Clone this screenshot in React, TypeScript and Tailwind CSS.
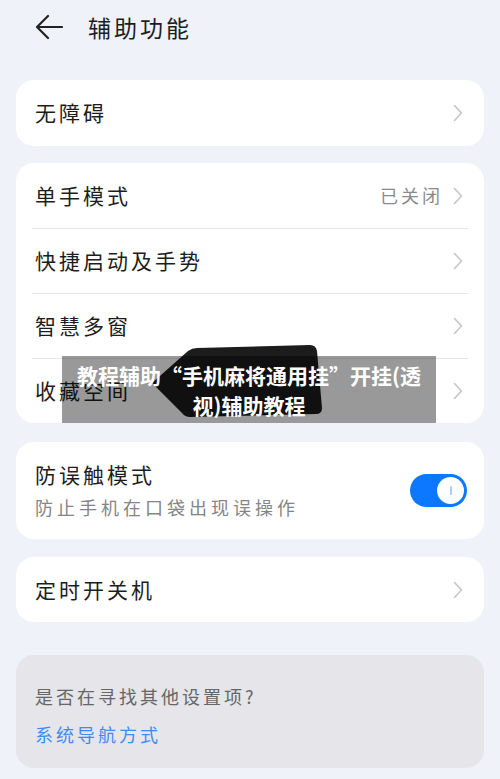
import * as React from "react";

const cjk = { fontFamily: "'Noto Sans CJK SC', 'Noto Sans', sans-serif" };

function Chevron() {
  return (
    <svg width="10" height="18" viewBox="0 0 10 18" fill="none">
      <path d="M1.5 1.5L8.5 9L1.5 16.5" stroke="#c6c6c6" strokeWidth="1.6" strokeLinecap="round" strokeLinejoin="round" />
    </svg>
  );
}

function Row({ label, value, first }: { label: string; value?: string; first?: boolean }) {
  return (
    <div className="px-[16px]">
      <div className={`flex h-[65px] items-center justify-between pl-[3px] pr-[5px] ${first ? "" : "border-t border-[#e6e6e6]"}`}>
        <span className="text-[21px] tracking-[3px] text-[#1d1d1d]">{label}</span>
        <div className="flex items-center gap-[10px]">
          {value && <span className="text-[18px] tracking-[3px] text-[#8a8a8a]">{value}</span>}
          <Chevron />
        </div>
      </div>
    </div>
  );
}

export default function App() {
  return (
    <div className="relative min-h-screen w-full overflow-hidden bg-[#eff2f8]" style={cjk}>
      <div className="flex h-[52px] items-center pl-[35px] pt-[2px]">
        <svg width="28" height="26" viewBox="0 0 28 26" fill="none">
          <path d="M27 13H2M13 2L2 13L13 24" stroke="#222" strokeWidth="2.2" strokeLinecap="round" strokeLinejoin="round" />
        </svg>
        <span className="ml-[25px] text-[23px] tracking-[3px] text-[#1d1d1d]">辅助功能</span>
      </div>

      <div className="flex flex-col px-[16px] pt-[28px]">
        <div className="flex h-[66px] items-center justify-between rounded-[18px] bg-white pl-[19px] pr-[21px]">
          <span className="text-[21px] tracking-[3px] text-[#1d1d1d]">无障碍</span>
          <Chevron />
        </div>

        <div className="mt-[17px] rounded-[18px] bg-white">
          <Row label="单手模式" value="已关闭" first />
          <Row label="快捷启动及手势" />
          <Row label="智慧多窗" />
          <Row label="收藏空间" />
        </div>

        <div className="mt-[19px] flex h-[97px] items-center justify-between rounded-[18px] bg-white pl-[19px] pr-[17px]">
          <div className="flex flex-col">
            <span className="text-[21px] leading-[30px] tracking-[3px] text-[#1d1d1d]">防误触模式</span>
            <span className="mt-[3px] text-[18px] leading-[30px] tracking-[4px] text-[#858585]">防止手机在口袋出现误操作</span>
          </div>
          <div className="flex h-[33px] w-[57px] items-center justify-end rounded-full bg-[#0b78ff] pr-[3px]">
            <div className="flex h-[27px] w-[27px] items-center justify-center rounded-full bg-white">
              <div className="h-[9px] w-[2px] rounded-full bg-[#a9cdfb]" />
            </div>
          </div>
        </div>

        <div className="mt-[18px] flex h-[65px] items-center justify-between rounded-[18px] bg-white pl-[19px] pr-[21px]">
          <span className="text-[21px] tracking-[3px] text-[#1d1d1d]">定时开关机</span>
          <Chevron />
        </div>

        <div className="mt-[33px] flex h-[113px] flex-col rounded-[18px] bg-[#e5e5ea] pl-[19px] pt-[26px]">
          <span className="text-[18px] leading-[30px] tracking-[3px] text-[#666666]">是否在寻找其他设置项?</span>
          <span className="mt-[8px] text-[18px] leading-[30px] tracking-[3px] text-[#3d8cf6]">系统导航方式</span>
        </div>
      </div>

      <svg className="absolute left-[148px] top-[342px]" width="180" height="80" viewBox="148 342 180 80">
        <path
          d="M152 383L188 351Q192 348 197 348L310 345Q316 345 317 351L322 408Q322 414 316 414L190 417Q185 417 182 413Z"
          fill="#1c1c1c"
        />
      </svg>

      <div className="absolute left-[62px] top-[356px] flex h-[67px] w-[374px] flex-col items-center justify-center bg-black/40 px-[10px]">
        <span className="text-center text-[21px] font-bold leading-[30px] text-white">
          教程辅助“手机麻将通用挂”开挂(透
          <br />
          视)辅助教程
        </span>
      </div>
    </div>
  );
}
